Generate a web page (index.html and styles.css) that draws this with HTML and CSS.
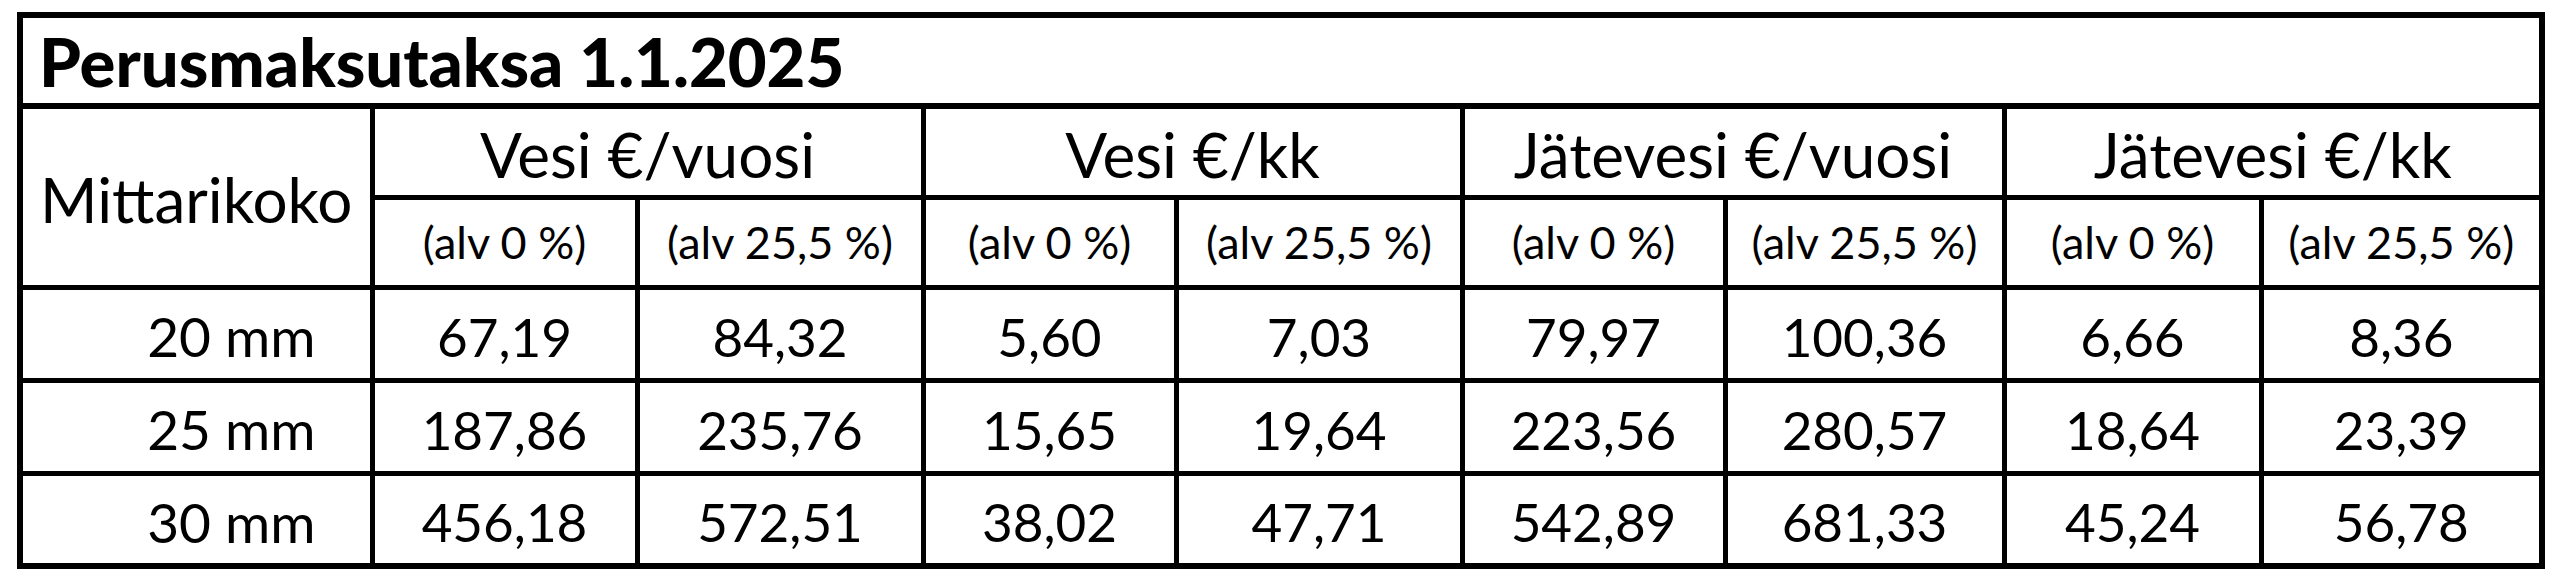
FILE: index.html
```html
<!DOCTYPE html>
<html lang="fi">
<head>
    <meta charset="UTF-8">
    <meta name="viewport" content="width=device-width, initial-scale=1.0">
    <title>Perusmaksutaksa 1.1.2025</title>
    <link rel="stylesheet" href="styles.css">
</head>
<body>
    <!-- perusmaksutaulukko -->
    <table class="tariff">
        <colgroup>
            <col class="col-size">
            <col class="col-a"><col class="col-b">
            <col class="col-c"><col class="col-d">
            <col class="col-e"><col class="col-f">
            <col class="col-g"><col class="col-h">
        </colgroup>
        <tr class="title-row">
            <th colspan="9" class="title">Perusmaksutaksa 1.1.2025</th>
        </tr>
        <tr class="group-row">
            <th rowspan="2" class="size-head">Mittarikoko</th>
            <th colspan="2">Vesi €/vuosi</th>
            <th colspan="2">Vesi €/kk</th>
            <th colspan="2">Jätevesi €/vuosi</th>
            <th colspan="2">Jätevesi €/kk</th>
        </tr>
        <tr class="vat-row">
            <th>(alv 0 %)</th><th>(alv 25,5 %)</th>
            <th>(alv 0 %)</th><th>(alv 25,5 %)</th>
            <th>(alv 0 %)</th><th>(alv 25,5 %)</th>
            <th>(alv 0 %)</th><th>(alv 25,5 %)</th>
        </tr>
        <tr class="data-row">
            <td class="size">20 mm</td>
            <td>67,19</td><td>84,32</td><td>5,60</td><td>7,03</td>
            <td>79,97</td><td>100,36</td><td>6,66</td><td>8,36</td>
        </tr>
        <tr class="data-row">
            <td class="size">25 mm</td>
            <td>187,86</td><td>235,76</td><td>15,65</td><td>19,64</td>
            <td>223,56</td><td>280,57</td><td>18,64</td><td>23,39</td>
        </tr>
        <tr class="data-row">
            <td class="size">30 mm</td>
            <td>456,18</td><td>572,51</td><td>38,02</td><td>47,71</td>
            <td>542,89</td><td>681,33</td><td>45,24</td><td>56,78</td>
        </tr>
    </table>
</body>
</html>
```

FILE: styles.css
```css
html, body {
    margin: 0;
    padding: 0;
    background-color: #ffffff;
}

body {
    padding: 12px 0 0 17px;
    font-family: Lato, "Open Sans", sans-serif;
    color: #000000;
}

.tariff {
    width: 2528px;
    table-layout: fixed;
    border-collapse: collapse;
    border: 6px solid #000000;
}

.col-size { width: 352px; }
.col-a { width: 265px; }
.col-b { width: 286px; }
.col-c { width: 253px; }
.col-d { width: 286px; }
.col-e { width: 263px; }
.col-f { width: 279px; }
.col-g { width: 257px; }
.col-h { width: 281px; }

th, td {
    border: 5px solid #000000;
    padding: 0;
    text-align: center;
    font-weight: normal;
    white-space: nowrap;
}

/* otsikko */
.title-row { height: 91px; }

.title {
    text-align: left;
    padding-left: 16px;
    font-size: 67px;
    font-weight: 900;
    border-bottom-width: 6px;
}

.group-row { height: 91px; }

.group-row th {
    font-size: 62px;
    padding-top: 4px;
}

.size-head {
    font-size: 64px;
}

.vat-row { height: 90px; }

.vat-row th {
    font-size: 45px;
}

.data-row { height: 93px; }

.data-row td {
    font-size: 53px;
    padding-top: 5px;
}

.data-row .size {
    text-align: right;
    padding-right: 54px;
    font-size: 55px;
}
```
